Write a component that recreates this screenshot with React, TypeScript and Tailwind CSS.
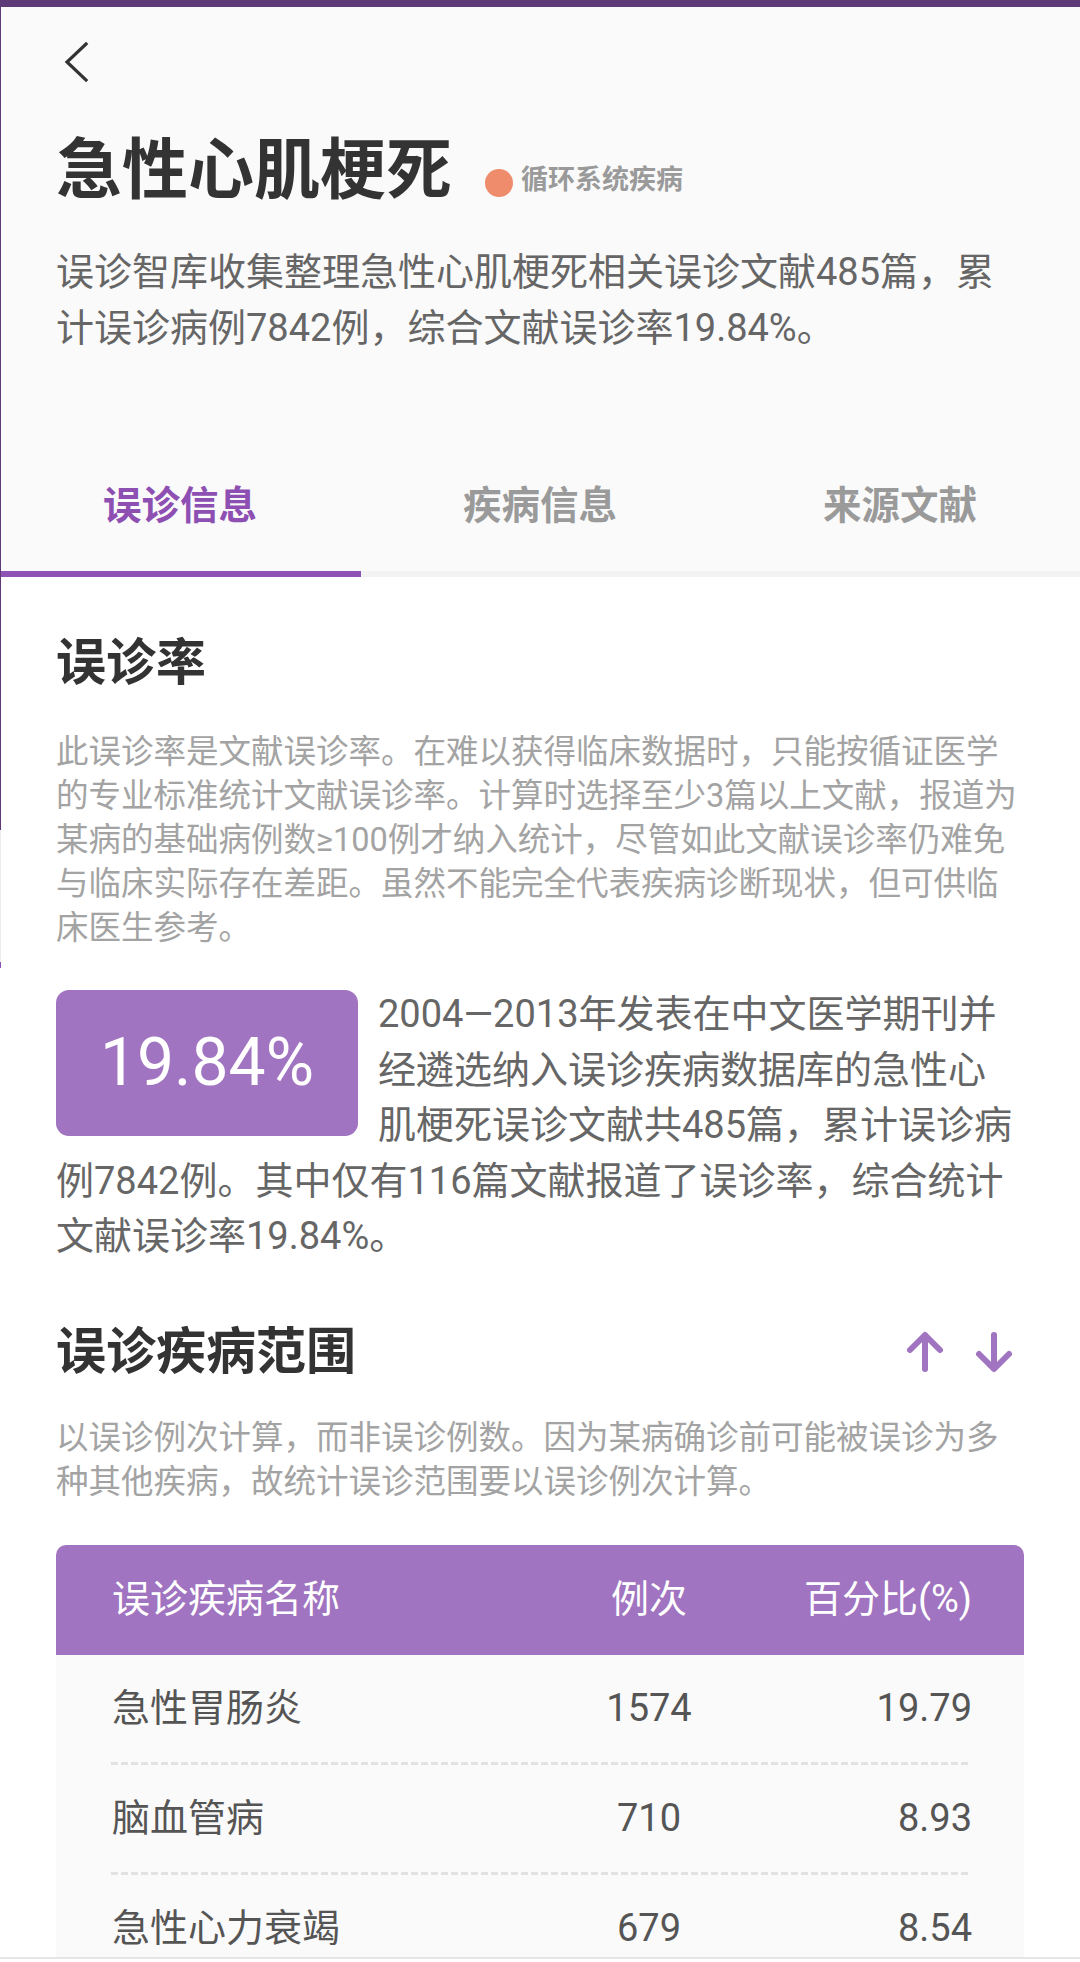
import React from "react";

const rows = [
  { name: "急性胃肠炎", count: "1574", pct: "19.79" },
  { name: "脑血管病", count: "710", pct: "8.93" },
  { name: "急性心力衰竭", count: "679", pct: "8.54" },
];

function ArrowUp() {
  return (
    <svg width="40" height="46" viewBox="0 0 40 46" fill="none" stroke="#a074c0" strokeWidth="6" strokeLinecap="round" strokeLinejoin="round">
      <line x1="20" y1="7" x2="20" y2="40" />
      <polyline points="5,21 20,6 35,21" />
    </svg>
  );
}

function ArrowDown() {
  return (
    <svg width="40" height="46" viewBox="0 0 40 46" fill="none" stroke="#a074c0" strokeWidth="6" strokeLinecap="round" strokeLinejoin="round">
      <line x1="20" y1="6" x2="20" y2="39" />
      <polyline points="5,25 20,40 35,25" />
    </svg>
  );
}

export default function App() {
  return (
    <div className="relative w-[1080px] h-[1962px] overflow-hidden bg-white font-[Roboto,'Noto_Sans_CJK_SC',sans-serif]">
      {/* top status strip */}
      <div className="h-[7px] bg-[#5e3a78]" />

      {/* header */}
      <div className="bg-[#fafafa]">
        <div className="h-[124px] pl-[62px] pt-[33px]">
          <svg width="30" height="46" viewBox="0 0 30 46" fill="none" stroke="#333333" strokeWidth="3.2" strokeLinecap="square">
            <polyline points="24,4 5,22 24,40" />
          </svg>
        </div>

        <div className="flex h-[80px] items-center pl-[56px]">
          <h1 className="text-[66px] font-bold leading-[80px] text-[#333333]">急性心肌梗死</h1>
          <div className="ml-[33px] mt-[18px] flex items-center">
            <span className="mt-[6px] block h-[28px] w-[28px] rounded-full bg-[#ee8c6c]" />
            <span className="ml-[8px] text-[27px] font-bold leading-[36px] text-[#9a9a9a]">循环系统疾病</span>
          </div>
        </div>

        <div className="mt-[33px] pl-[56px] text-[38px] leading-[56px] text-[#666666]">
          <div className="whitespace-nowrap">误诊智库收集整理急性心肌梗死相关误诊文献485篇，累</div>
          <div className="whitespace-nowrap">计误诊病例7842例，综合文献误诊率19.84%。</div>
        </div>

        <div className="mt-[84px] grid h-[131px] grid-cols-3 items-center text-center text-[38.5px] font-bold">
          <div className="text-[#8e4fb3]">误诊信息</div>
          <div className="text-[#9a9a9a]">疾病信息</div>
          <div className="text-[#9a9a9a]">来源文献</div>
        </div>
        <div className="flex h-[6px]">
          <div className="w-[361px] bg-[#8e52b5]" />
          <div className="flex-1 bg-[#f3f3f3]" />
        </div>
      </div>

      {/* body */}
      <div className="pl-[56px] pt-[54px]">
        <h2 className="text-[50px] font-bold leading-[64px] text-[#333333]">误诊率</h2>
        <div className="mt-[35px] text-[32.5px] leading-[44px] text-[#a3a3a3]">
          <div className="whitespace-nowrap">此误诊率是文献误诊率。在难以获得临床数据时，只能按循证医学</div>
          <div className="whitespace-nowrap">的专业标准统计文献误诊率。计算时选择至少3篇以上文献，报道为</div>
          <div className="whitespace-nowrap">某病的基础病例数≥100例才纳入统计，尽管如此文献误诊率仍难免</div>
          <div className="whitespace-nowrap">与临床实际存在差距。虽然不能完全代表疾病诊断现状，但可供临</div>
          <div className="whitespace-nowrap">床医生参考。</div>
        </div>

        <div className="mt-[37px] flow-root text-[38px] leading-[55.5px] text-[#666666]">
          <div className="float-left mr-[20px] mt-[3px] flex h-[146px] w-[302px] items-center justify-center rounded-[13px] bg-[#a074c0] text-[66px] leading-none text-white">
            19.84%
          </div>
          <div className="whitespace-nowrap">
            2004—2013年发表在中文医学期刊并
            <br />
            经遴选纳入误诊疾病数据库的急性心
            <br />
            肌梗死误诊文献共485篇，累计误诊病
            <br />
            例7842例。其中仅有116篇文献报道了误诊率，综合统计
            <br />
            文献误诊率19.84%。
          </div>
        </div>

        <div className="mt-[55px] flex items-center justify-between pr-[66px]">
          <h2 className="text-[50px] font-bold leading-[64px] text-[#333333]">误诊疾病范围</h2>
          <div className="flex items-center gap-[29px]">
            <ArrowUp />
            <ArrowDown />
          </div>
        </div>

        <div className="mt-[32px] text-[32.5px] leading-[44px] text-[#a3a3a3]">
          <div className="whitespace-nowrap">以误诊例次计算，而非误诊例数。因为某病确诊前可能被误诊为多</div>
          <div className="whitespace-nowrap">种其他疾病，故统计误诊范围要以误诊例次计算。</div>
        </div>
      </div>

      {/* table */}
      <div className="mx-[56px] mt-[41px] overflow-hidden rounded-t-[10px]">
        <div className="grid h-[110px] grid-cols-[1fr_160px_243px] items-center bg-[#a074c0] pl-[56px] pr-[52px] text-[38px] text-white">
          <div>误诊疾病名称</div>
          <div className="text-center">例次</div>
          <div className="text-right">百分比(%)</div>
        </div>
        <div className="bg-[#fafafa] pl-[55px] pr-[55px] text-[38px] text-[#555555]">
          {rows.map((r, i) => (
            <div key={r.name}>
              <div className="mr-[-3px] grid h-[107px] grid-cols-[1fr_160px_243px] items-center">
                <div className="pl-[1px]">{r.name}</div>
                <div className="text-center">{r.count}</div>
                <div className="text-right">{r.pct}</div>
              </div>
              {i < rows.length - 1 && (
                <div className="h-[3px] [background-image:repeating-linear-gradient(to_right,#e2e2e2_0px,#e2e2e2_7px,transparent_7px,transparent_10px)]" />
              )}
            </div>
          ))}
        </div>
      </div>

      {/* left edge line artifact */}
      <div className="absolute left-0 top-0 h-[830px] w-px bg-[#5e3a78]" />
      <div className="absolute left-0 top-[830px] h-[132px] w-px bg-[#ececec]" />
      <div className="absolute left-0 top-[962px] h-[6px] w-px bg-[#8e52b5]" />

      {/* bottom edge */}
      <div className="absolute bottom-0 left-0 h-[5px] w-full border-t-2 border-[#e6e6e6] bg-white" />
    </div>
  );
}
